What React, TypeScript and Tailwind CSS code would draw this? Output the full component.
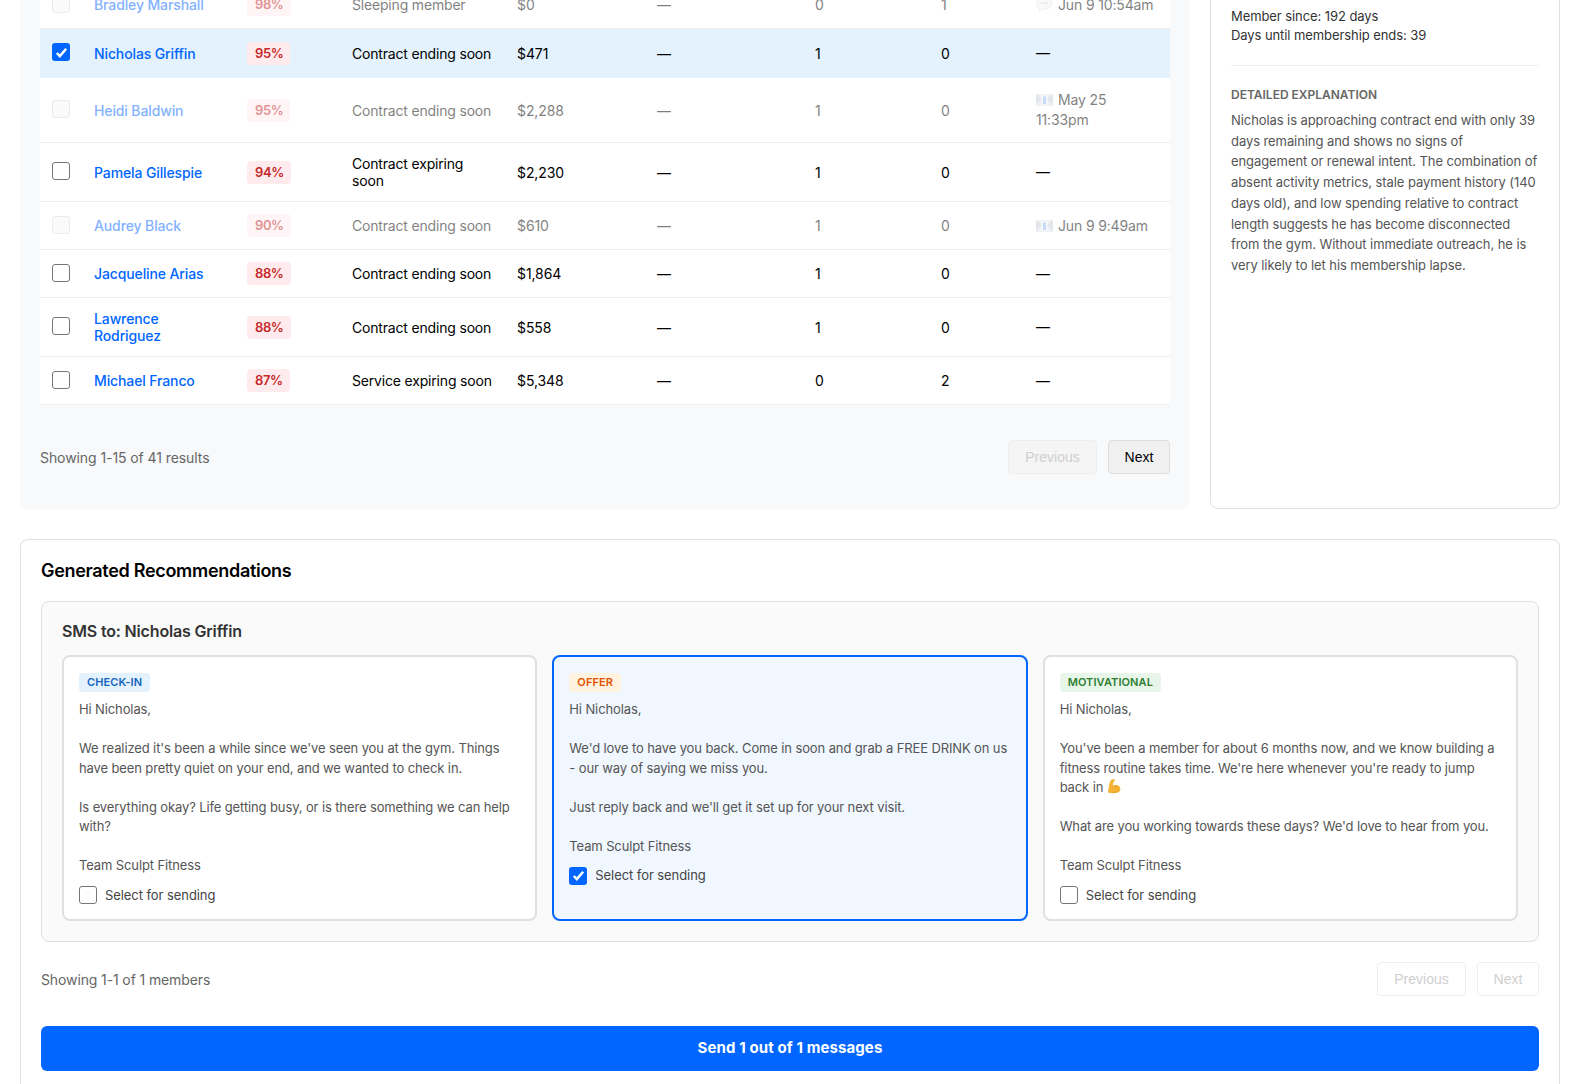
const font = "[font-family:Inter,'Liberation_Sans',sans-serif]";

type Row = {
  name: string;
  score: string;
  reason: string;
  amount: string;
  a: string;
  b: string;
  last?: string;
  icon?: "chat" | "mail";
  faded?: boolean;
  checked?: boolean;
};

const rows: Row[] = [
  { name: "Bradley Marshall", score: "98%", reason: "Sleeping member", amount: "$0", a: "0", b: "1", last: "Jun 9 10:54am", icon: "chat", faded: true },
  { name: "Nicholas Griffin", score: "95%", reason: "Contract ending soon", amount: "$471", a: "1", b: "0", checked: true },
  { name: "Heidi Baldwin", score: "95%", reason: "Contract ending soon", amount: "$2,288", a: "1", b: "0", last: "May 25 11:33pm", icon: "mail", faded: true },
  { name: "Pamela Gillespie", score: "94%", reason: "Contract expiring soon", amount: "$2,230", a: "1", b: "0" },
  { name: "Audrey Black", score: "90%", reason: "Contract ending soon", amount: "$610", a: "1", b: "0", last: "Jun 9 9:49am", icon: "mail", faded: true },
  { name: "Jacqueline Arias", score: "88%", reason: "Contract ending soon", amount: "$1,864", a: "1", b: "0" },
  { name: "Lawrence Rodriguez", score: "88%", reason: "Contract ending soon", amount: "$558", a: "1", b: "0" },
  { name: "Michael Franco", score: "87%", reason: "Service expiring soon", amount: "$5,348", a: "0", b: "2" },
];

function Check({ checked }: { checked?: boolean }) {
  if (checked) {
    return (
      <span className="flex h-[18px] w-[18px] items-center justify-center rounded-[3px] bg-[#0066ff]">
        <svg viewBox="0 0 16 16" className="h-[15px] w-[15px]" fill="none" stroke="white" strokeWidth="2.6">
          <path d="M3 8.5l3.2 3.4L13 4" />
        </svg>
      </span>
    );
  }
  return <span className="block h-[18px] w-[18px] rounded-[3px] border border-[#767676] bg-white" />;
}

function ChatIcon() {
  return (
    <svg viewBox="0 0 18 18" className="mr-[5px] inline-block h-[17px] w-[17px] align-[-3px]">
      <path d="M9 1c4.400 0 8 2.800 8 6.400s-3.600 6.400-8 6.400c-.7 0-1.400-.1-2-.2-.9 1.300-2.500 2.700-4.400 3 .9-1 1.400-2.200 1.400-3.900C2.400 11.500 1 9.600 1 7.400 1 3.800 4.600 1 9 1z" fill="#f4f4f4" stroke="#d4d4d4" strokeWidth=".7" />
      <circle cx="6.200" cy="7.400" r=".7" fill="#9a9a9a" />
      <circle cx="9" cy="7.400" r=".7" fill="#9a9a9a" />
      <circle cx="11.800" cy="7.400" r=".7" fill="#9a9a9a" />
    </svg>
  );
}

function MailIcon() {
  return (
    <svg viewBox="0 0 17 12" className="mr-[5px] inline-block h-[12px] w-[17px] align-[-1px]">
      <rect x="0" y="0" width="17" height="12" fill="#dfe3ea" />
      <path d="M0 0l6 5-6 6zM17 0l-6 5 6 6z" fill="#c9ced8" />
      <rect x="5.500" y="1" width="6" height="10" fill="#eef3fb" />
      <rect x="7" y="2.500" width="3" height="7.500" fill="#8fb6ee" />
    </svg>
  );
}

function Arm() {
  return (
    <svg viewBox="0 0 16 16" className="inline-block h-[15px] w-[15px] align-[-2px]">
      <path d="M4.800.7c1.700-.7 3.500-.3 3.700.7.200.8-.5 1.300-1.500 1.400-.5 1.500-.7 3-.5 4.600 1.500-1.200 3.700-1.400 5.400-.5 1.800 1 2.700 2.900 2.300 4.800-.4 2-2.600 3.300-5.200 3.300H3c-1.300 0-2-1-1.800-2.200C1.600 9.200 2.500 4.800 3.500 2.100 3.800 1.400 4.200 1 4.800.7z" fill="#f5b335" />
      <path d="M6.900 7.500c1.800-.6 3.700.1 4.400 1.500M6 14.900c2.400-.3 4.200-1.100 5-2.700" fill="none" stroke="#dd8f1c" strokeWidth=".7" />
    </svg>
  );
}

function TableRow({ row }: { row: Row }) {
  const fade = row.faded ? "opacity-50" : "";
  return (
    <tr className={row.checked ? "h-[49px] border-b border-[#e3f2fd] bg-[#e3f2fd]" : "border-b border-[#eeeeee] bg-white"}>
      <td className={`px-3 pb-[13px] pt-[11px] align-middle ${fade}`}>
        {row.faded ? (
          <span className="block h-[18px] w-[18px] rounded-[3px] border border-[#d8d8d8] bg-[#f7f7f7]" />
        ) : (
          <Check checked={row.checked} />
        )}
      </td>
      <td className={`px-3 py-3 font-medium tracking-[-0.12px] text-[#0066ff] ${fade}`}>{row.name}</td>
      <td className={`px-3 py-3 ${fade}`}>
        <span className="inline-block rounded-[4px] bg-[#ffebee] py-[3px] pl-2 pr-[7px] text-[13px] font-semibold leading-[17px] tracking-[-0.4px] text-[#c62828]">
          {row.score}
        </span>
      </td>
      <td className={`py-3 pl-3 pr-[8px] tracking-[-0.18px] ${fade}`}>{row.reason}</td>
      <td className={`px-3 py-3 tracking-[-0.1px] ${fade}`}>{row.amount}</td>
      <td className={`px-3 py-3 ${fade}`}>—</td>
      <td className={`px-3 py-3 ${fade}`}>{row.a}</td>
      <td className={`px-3 py-3 ${fade}`}>{row.b}</td>
      <td className={`px-3 py-3 leading-[20px] tracking-[-0.15px] ${fade}`}>
        {row.icon === "chat" && <ChatIcon />}
        {row.icon === "mail" && <MailIcon />}
        {row.last ?? "—"}
      </td>
    </tr>
  );
}

function PageButton({ label, disabled, className }: { label: string; disabled?: boolean; className: string }) {
  return (
    <button
      className={`h-[34px] rounded-[4px] border text-[14px] [font-family:'Liberation_Sans',sans-serif] ${className} ${
        disabled ? "border-[#eeeeee] bg-[#f5f5f5] text-[#cfcfcf]" : "border-[#dddddd] bg-[#f0f0f0] text-black"
      }`}
    >
      {label}
    </button>
  );
}

function Tag({ label, className }: { label: string; className: string }) {
  return (
    <span className={`block w-fit rounded-[4px] px-2 py-[2px] text-[11px] font-semibold leading-[15px] tracking-[0.1px] ${className}`}>
      {label}
    </span>
  );
}

function MessageCard({
  tag,
  tagClass,
  selected,
  children,
}: {
  tag: string;
  tagClass: string;
  selected?: boolean;
  children: React.ReactNode;
}) {
  return (
    <div
      className={`rounded-[8px] border-2 px-[15px] pb-[14px] pt-[16px] ${
        selected ? "border-[#0066ff] bg-[#f0f7ff]" : "border-[#e0e0e0] bg-white"
      }`}
    >
      <Tag label={tag} className={tagClass} />
      <div className="mt-[8px] whitespace-pre-wrap text-[13px] leading-[19.5px] tracking-[-0.12px] text-[#555555]">{children}</div>
      <label className="mt-[10px] flex items-center gap-2 text-[13px] tracking-[-0.07px] text-[#444444]">
        <Check checked={selected} />
        Select for sending
      </label>
    </div>
  );
}

export default function App() {
  return (
    <div className={`h-[1084px] overflow-hidden bg-white text-[14px] text-black ${font}`}>
      <div className="-mt-[500px] pl-[20px] pr-[27px]">
        <div className="flex gap-[21px]">
          <div className="w-[1169px] rounded-[8px] bg-[#f8f9fa] pb-[35px] pl-[20px] pr-[19px] pt-[481px]">
            <table className="w-full table-fixed border-collapse leading-[17px]">
              <colgroup>
                <col className="w-[42px]" />
                <col className="w-[153px]" />
                <col className="w-[105px]" />
                <col className="w-[165px]" />
                <col className="w-[140px]" />
                <col className="w-[158px]" />
                <col className="w-[126px]" />
                <col className="w-[95px]" />
                <col />
              </colgroup>
              <tbody>
                {rows.map((row) => (
                  <TableRow key={row.name} row={row} />
                ))}
              </tbody>
            </table>
            <div className="mt-[35px] flex items-center justify-between">
              <span className="text-[14px] tracking-[-0.08px] text-[#666666]">Showing 1-15 of 41 results</span>
              <div className="flex gap-[11px]">
                <PageButton label="Previous" disabled className="w-[89px]" />
                <PageButton label="Next" className="w-[62px]" />
              </div>
            </div>
          </div>
          <div className="flex-1 rounded-[8px] border border-[#e0e0e0] bg-white px-[20px] pt-[506px]">
            <p className="text-[13px] leading-[19px] tracking-[-0.08px] text-[#333333]">Member since: 192 days</p>
            <p className="text-[13px] leading-[19px] tracking-[-0.08px] text-[#333333]">Days until membership ends: 39</p>
            <div className="mt-[20px] border-t border-[#eeeeee] pt-[21px]">
              <h4 className="text-[12px] font-semibold leading-[16px] text-[#666666]">DETAILED EXPLANATION</h4>
              <p className="mt-[7px] text-[13px] leading-[20.7px] tracking-[-0.08px] text-[#555555]">
                Nicholas is approaching contract end with only 39 days remaining and shows no signs of engagement or
                renewal intent. The combination of absent activity metrics, stale payment history (140 days old), and low
                spending relative to contract length suggests he has become disconnected from the gym. Without immediate
                outreach, he is very likely to let his membership lapse.
              </p>
            </div>
          </div>
        </div>
        <div className="mt-[30px] rounded-[8px] border border-[#e0e0e0] bg-white px-[20px] pb-[20px] pt-[20px]">
          <h3 className="text-[18px] font-semibold leading-[22px] tracking-[-0.3px] text-black">Generated Recommendations</h3>
          <div className="mt-[19px] rounded-[8px] border border-[#e0e0e0] bg-[#fafafa] px-[20px] pb-[20px] pt-[19px]">
            <h4 className="text-[16px] font-semibold leading-[20px] tracking-[-0.17px] text-[#333333]">SMS to: Nicholas Griffin</h4>
            <div className="mt-[14px] grid grid-cols-3 gap-[15px]">
              <MessageCard tag="CHECK-IN" tagClass="bg-[#e3f2fd] text-[#1565c0]">
                {"Hi Nicholas,\n\nWe realized it's been a while since we've seen you at the gym. Things have been pretty quiet on your end, and we wanted to check in.\n\nIs everything okay? Life getting busy, or is there something we can help with?\n\nTeam Sculpt Fitness"}
              </MessageCard>
              <MessageCard tag="OFFER" tagClass="bg-[#fff3e0] text-[#e65100]" selected>
                {"Hi Nicholas,\n\nWe'd love to have you back. Come in soon and grab a FREE DRINK on us - our way of saying we miss you.\n\nJust reply back and we'll get it set up for your next visit.\n\nTeam Sculpt Fitness"}
              </MessageCard>
              <MessageCard tag="MOTIVATIONAL" tagClass="bg-[#e8f5e9] text-[#2e7d32]">
                {"Hi Nicholas,\n\nYou've been a member for about 6 months now, and we know building a fitness routine takes time. We're here whenever you're ready to jump back in "}
                <Arm />
                {"\n\nWhat are you working towards these days? We'd love to hear from you.\n\nTeam Sculpt Fitness"}
              </MessageCard>
            </div>
          </div>
          <div className="mt-[20px] flex items-center justify-between">
            <span className="text-[14px] tracking-[-0.12px] text-[#666666]">Showing 1-1 of 1 members</span>
            <div className="flex gap-[11px]">
              <button className="h-[34px] w-[89px] rounded-[4px] border border-[#eeeeee] bg-white text-[14px] text-[#cfcfcf] [font-family:'Liberation_Sans',sans-serif]">
                Previous
              </button>
              <button className="h-[34px] w-[62px] rounded-[4px] border border-[#eeeeee] bg-white text-[14px] text-[#cfcfcf] [font-family:'Liberation_Sans',sans-serif]">
                Next
              </button>
            </div>
          </div>
          <button className="mt-[30px] h-[45px] w-full rounded-[6px] bg-[#0066ff] text-[15px] font-bold tracking-[0.1px] text-white">
            Send 1 out of 1 messages
          </button>
        </div>
      </div>
    </div>
  );
}
